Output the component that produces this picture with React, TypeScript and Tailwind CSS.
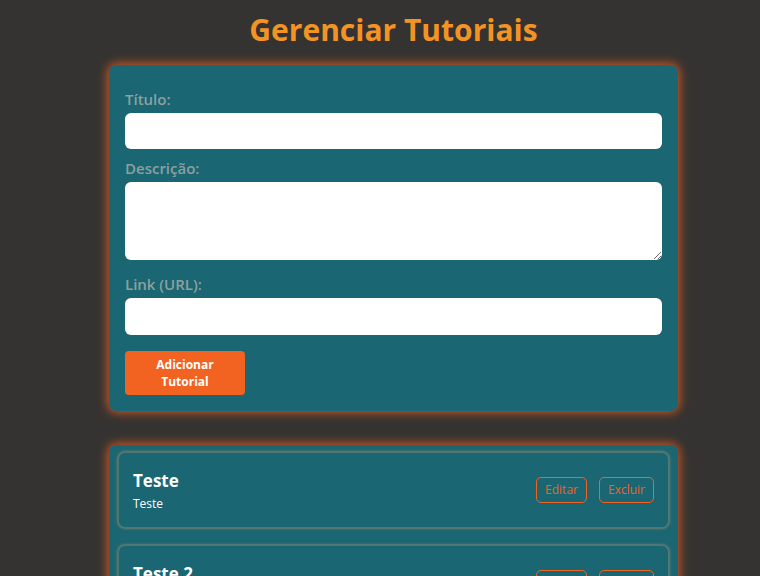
const tutorials = [
  { id: 1, title: 'Teste', description: 'Teste' },
  { id: 2, title: 'Teste 2', description: 'Teste 2' },
];

function Field({ label, children }: { label: string; children: React.ReactNode }) {
  return (
    <div className="mb-[9px]">
      <label className="block text-[15px] leading-5 font-semibold text-[#8ca0a0] mb-1">{label}</label>
      {children}
    </div>
  );
}

function App() {
  return (
    <div
      className="min-h-screen bg-[#353331] pt-3 pb-10"
      style={{ fontFamily: '"Open Sans", Lato, sans-serif' }}
    >
      <div className="w-[569px] ml-[109px]">
        <h1 className="text-center text-[30px] leading-9 font-bold text-[#f39323] mb-[17px]">
          Gerenciar Tutoriais
        </h1>

        <form className="bg-[#1a6672] rounded-lg px-4 pt-[24px] pb-4 shadow-[0_0_10px_2px_rgba(242,99,34,0.75)]">
          <Field label="Título:">
            <input className="block w-full h-9 rounded-md bg-white px-2 outline-none" />
          </Field>
          <Field label="Descrição:">
            <textarea className="block w-full h-[78px] rounded-md bg-white px-2 py-1 outline-none" />
          </Field>
          <div className="mt-[14px]">
            <Field label="Link (URL):">
              <input className="block w-full h-[37px] rounded-md bg-white px-2 outline-none" />
            </Field>
          </div>
          <button
            type="button"
            className="mt-[7px] w-[120px] h-11 rounded bg-[#f26322] text-white text-[12px] leading-[17px] font-bold px-5"
          >
            Adicionar Tutorial
          </button>
        </form>

        <div className="mt-[34px] bg-[#1a6672] rounded-lg px-2 pt-1.5 pb-2 space-y-[15px] shadow-[0_0_10px_2px_rgba(242,99,34,0.75)]">
          {tutorials.map(t => (
            <div
              key={t.id}
              className="flex items-center justify-between h-[78px] rounded-lg border-2 border-[#4f7773] shadow-[0_0_3px_rgba(120,120,100,0.8)] px-[14px]"
            >
              <div className="pt-1">
                <h3 className="text-[17px] leading-6 font-bold text-white">{t.title}</h3>
                <p className="text-[12px] leading-[22px] text-white">{t.description}</p>
              </div>
              <div className="flex gap-3">
                <button className="h-[26px] px-2 rounded-[5px] border border-[#f26322] text-[#f26322] text-[12px]">
                  Editar
                </button>
                <button className="h-[26px] px-2 rounded-[5px] border border-[#f26322] text-[#f26322] text-[12px]">
                  Excluir
                </button>
              </div>
            </div>
          ))}
        </div>
      </div>
    </div>
  );
}

export default App;
